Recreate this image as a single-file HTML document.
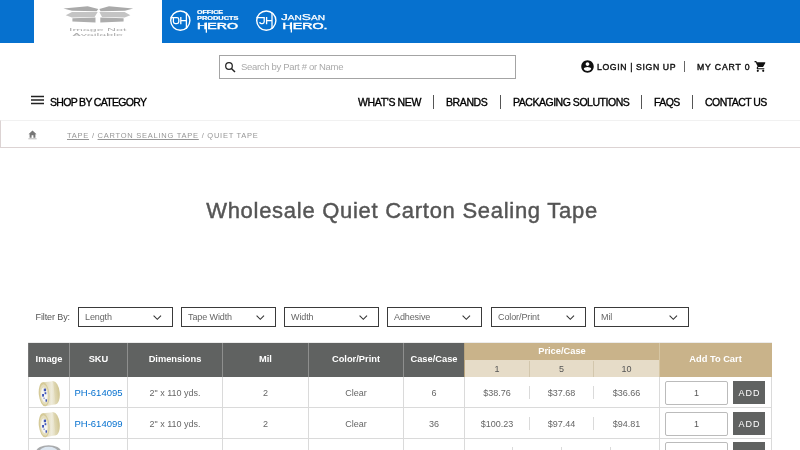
<!DOCTYPE html>
<html><head><meta charset="utf-8">
<style>
*{box-sizing:border-box;margin:0;padding:0}
html,body{width:800px;height:450px;overflow:hidden;background:#fff;font-family:"Liberation Sans",sans-serif;color:#111}
.abs{position:absolute}
#top{left:0;top:0;width:800px;height:43px;background:#0671cf}
#logo{left:34px;top:0;width:128px;height:43px;background:#fff}
#search{left:219px;top:55px;width:297px;height:24px;border:1px solid #a4a4a4;background:#fff}
.t{position:absolute;white-space:nowrap;line-height:1}
#bc{left:0;top:120px;width:800px;height:28px;border-left:1px solid #dcd3d3;border-bottom:1px solid #dcd3d3;border-top:1px solid #f1f1f1;background:#fff}
.nav{font-size:10.5px;color:#000;top:97px;letter-spacing:-0.55px;-webkit-text-stroke:0.35px #000}
.sep{position:absolute;width:1px;background:#555}
.acc{font-size:8.7px;letter-spacing:0.9px;color:#111;top:63px;-webkit-text-stroke:0.4px #111}
h1{position:absolute;left:2px;width:800px;text-align:center;top:200.3px;font-size:22px;line-height:1;font-weight:normal;color:#555;letter-spacing:0.72px;white-space:nowrap;-webkit-text-stroke:0.45px #555}
.sel{position:absolute;top:307px;height:20px;width:95px;border:1px solid #3a3a3a;background:#fff;font-size:9px;color:#666}
.sel span{position:absolute;left:6px;top:5px;line-height:1;letter-spacing:-0.1px}
.sel svg{position:absolute;left:73.500px;top:6.800px}
.c{text-align:center}
.th{color:#fff;font-size:9.3px;font-weight:bold}
.sub{color:#555;font-size:9px}
.td{color:#666;font-size:9px;margin-top:0.5px}
.sku{color:#0671cf;font-size:9.5px;margin-top:-0.5px}
.qty{width:63px;height:24px;border:1px solid #bbb;border-radius:2px;line-height:22px;background:#fff;color:#555;font-size:9px;text-align:center}
.add{width:32px;height:23px;background:#606261;color:#fff;line-height:24px;font-size:9px;letter-spacing:1px;text-indent:1px;text-align:center}
</style></head><body><div id="wrap" style="position:absolute;left:0;top:0;width:800px;height:450px;will-change:transform;background:transparent">
<div class="abs" id="top"></div>
<div class="abs" id="logo">
<svg width="128" height="43" viewBox="34 0 128 43" style="position:absolute;left:0;top:0">
 <g fill="#aaaaaa">
  <polygon points="63.4,8.4 87.6,6.2 98.3,9 96.6,11.2 72,10.8"/>
  <polygon points="133.2,8.4 109,6.2 99.4,9 100.5,11.2 125,10.8"/>
 </g>
 <g fill="#c4c4c4">
  <polygon points="65.7,15.2 72,11.9 97.7,11.9 94.6,16.9 72,17.4"/>
  <polygon points="130.4,15.2 124.6,11.9 99.4,11.9 102,16.9 124.6,17.4"/>
 </g>
 <g fill="#adadad">
  <polygon points="72.4,18.2 95.5,17.6 95.5,22.6 72.4,21.6"/>
  <polygon points="123.6,18.2 100.3,17.6 100.3,22.6 123.6,21.6"/>
 </g>
 <g fill="#adadad" style="font-family:'Liberation Sans',sans-serif;font-size:7px" text-anchor="middle">
  <text transform="translate(97.7 30.9) scale(1.78 0.56)" x="0" y="0">Image Not</text>
  <text transform="translate(97.7 36) scale(1.78 0.56)" x="0" y="0">Available</text>
 </g>
</svg>
</div>
<!-- OH logo -->
<svg class="abs" style="left:162px;top:0" width="190" height="43" viewBox="162 0 190 43">
 <g fill="none" stroke="#fff" stroke-width="1.4">
  <circle cx="180.3" cy="20.6" r="9.6"/>
  <circle cx="266.3" cy="20.6" r="9.6"/>
 </g>
 <g fill="none" stroke="#fff" stroke-width="1.3">
  <path d="M170.6,17.6 H177 Q178.8,17.6 178.8,19.4 V21.8 Q178.800,23.600 177,23.600 H175.200 Q173.400,23.600 173.400,21.800 V17.600"/>
  <path d="M180.800,17 V24.200 M180.800,20.600 H186.400 M186.400,12.500 V29"/>
  <path d="M256.600,17.600 H264.200 V21.800 Q264.200,23.600 262.400,23.600 H261.400 Q259.800,23.600 259.800,22"/>
  <path d="M266.600,17 V24.200 M266.600,20.600 H272 M272,12.500 V29"/>
 </g>
 <g fill="#fff" stroke="#fff" style="font-family:'Liberation Sans',sans-serif">
  <text x="197" y="14.300" font-size="4.600" font-weight="bold" textLength="26" lengthAdjust="spacingAndGlyphs" stroke-width="0.200">OFFICE</text>
  <text x="197" y="20.200" font-size="4.600" font-weight="bold" textLength="41.500" lengthAdjust="spacingAndGlyphs" stroke-width="0.200">PRODUCTS</text>
  <text x="197" y="28.800" font-size="8.800" textLength="41" lengthAdjust="spacingAndGlyphs" stroke-width="0.450">HERO</text>
  <rect x="205.700" y="22.500" width="1.300" height="10.200" stroke="none"/>
  <text x="281" y="20" font-size="7" textLength="44" lengthAdjust="spacingAndGlyphs" stroke-width="0.250"><tspan font-size="9.600">J</tspan>AN<tspan font-size="9.600">S</tspan>AN</text>
  <text x="282.500" y="28.600" font-size="8.800" textLength="45" lengthAdjust="spacingAndGlyphs" stroke-width="0.450">HERO.</text>
  <rect x="290.700" y="22.300" width="1.300" height="10.200" stroke="none"/>
 </g>
</svg>
<div class="abs" id="search"></div>
<svg class="abs" style="left:224px;top:61px" width="13" height="13" viewBox="0 0 13 13"><circle cx="5" cy="5" r="3.300" fill="none" stroke="#222" stroke-width="1.250"/><path d="M7.400,7.400 L11,11" stroke="#222" stroke-width="1.450"/></svg>
<div class="t" style="left:241px;top:62px;font-size:9.5px;color:#aaa;letter-spacing:-0.32px">Search by Part # or Name</div>
<svg class="abs" style="left:580px;top:58.8px" width="15" height="15" viewBox="0 0 24 24"><path fill="#111" d="M12 2C6.48 2 2 6.48 2 12s4.48 10 10 10 10-4.480 10-10S17.520 2 12 2zm0 3c1.660 0 3 1.340 3 3s-1.340 3-3 3-3-1.340-3-3 1.340-3 3-3zm0 14.200c-2.500 0-4.710-1.280-6-3.220.030-1.990 4-3.080 6-3.080 1.990 0 5.970 1.090 6 3.080-1.290 1.940-3.500 3.220-6 3.220z"/></svg>
<div class="t acc" style="left:597px;letter-spacing:0.62px">LOGIN | SIGN UP</div>
<div class="sep" style="left:684px;top:61px;height:11px;background:#666"></div>
<div class="t acc" style="left:697px;letter-spacing:0.85px">MY CART 0</div>
<svg class="abs" style="left:754px;top:60px" width="13" height="13" viewBox="0 0 24 24"><path fill="#111" d="M7 18c-1.100 0-1.990.900-1.990 2S5.900 22 7 22s2-.900 2-2-.900-2-2-2zM1 2v2h2l3.600 7.590-1.350 2.450c-.160.280-.250.610-.250.960 0 1.100.900 2 2 2h12v-2H7.420c-.140 0-.250-.110-.250-.250l.030-.120.900-1.630h7.450c.750 0 1.410-.410 1.750-1.030l3.580-6.490c.080-.140.120-.310.120-.480 0-.550-.450-1-1-1H5.210l-.940-2H1zm16 16c-1.100 0-1.990.900-1.990 2s.890 2 1.990 2 2-.900 2-2-.900-2-2-2z"/></svg>
<svg class="abs" style="left:31px;top:95px" width="14" height="10" viewBox="0 0 14 10"><path d="M0,1.600 H13 M0,5 H13 M0,8.400 H13" stroke="#222" stroke-width="1.5"/></svg>
<div class="t nav" style="left:50px;letter-spacing:-0.68px">SHOP BY CATEGORY</div>
<div class="t nav" style="left:358px;letter-spacing:-0.35px">WHAT'S NEW</div>
<div class="sep" style="left:433px;top:95px;height:14px"></div>
<div class="t nav" style="left:446px;letter-spacing:-0.4px">BRANDS</div>
<div class="sep" style="left:500px;top:95px;height:14px"></div>
<div class="t nav" style="left:513px;letter-spacing:-0.47px">PACKAGING SOLUTIONS</div>
<div class="sep" style="left:641px;top:95px;height:14px"></div>
<div class="t nav" style="left:654px">FAQS</div>
<div class="sep" style="left:692px;top:95px;height:14px"></div>
<div class="t nav" style="left:705px">CONTACT US</div>
<div class="abs" id="bc"></div>
<svg class="abs" style="left:28px;top:130px" width="9" height="10" viewBox="0 0 9 10"><path fill="#777" d="M4.500,0.500 L8.500,4.200 H7.400 V7.800 H5.400 V5.300 H3.600 V7.800 H1.600 V4.200 H0.500 Z"/><rect x="0.400" y="8.500" width="8.200" height="0.700" fill="#999"/></svg>
<div class="t" style="left:67px;top:131.700px;font-size:7.500px;letter-spacing:0.75px;color:#969696"><u>TAPE</u> / <u>CARTON SEALING TAPE</u> / QUIET TAPE</div>
<h1>Wholesale Quiet Carton Sealing Tape</h1>
<div class="t" style="left:35.500px;top:313px;font-size:9px;color:#555;letter-spacing:-0.1px">Filter By:</div>
<div class="sel" style="left:78px"><span>Length</span><svg width="9" height="6" viewBox="0 0 9 6"><path d="M0.600,0.700 L4.300,4.300 L8,0.700" fill="none" stroke="#333" stroke-width="1.100"/></svg></div>
<div class="sel" style="left:181px"><span>Tape Width</span><svg width="9" height="6" viewBox="0 0 9 6"><path d="M0.600,0.700 L4.300,4.300 L8,0.700" fill="none" stroke="#333" stroke-width="1.100"/></svg></div>
<div class="sel" style="left:284px"><span>Width</span><svg width="9" height="6" viewBox="0 0 9 6"><path d="M0.600,0.700 L4.300,4.300 L8,0.700" fill="none" stroke="#333" stroke-width="1.100"/></svg></div>
<div class="sel" style="left:387px"><span>Adhesive</span><svg width="9" height="6" viewBox="0 0 9 6"><path d="M0.600,0.700 L4.300,4.300 L8,0.700" fill="none" stroke="#333" stroke-width="1.100"/></svg></div>
<div class="sel" style="left:491px"><span>Color/Print</span><svg width="9" height="6" viewBox="0 0 9 6"><path d="M0.600,0.700 L4.300,4.300 L8,0.700" fill="none" stroke="#333" stroke-width="1.100"/></svg></div>
<div class="sel" style="left:594px"><span>Mil</span><svg width="9" height="6" viewBox="0 0 9 6"><path d="M0.600,0.700 L4.300,4.300 L8,0.700" fill="none" stroke="#333" stroke-width="1.100"/></svg></div>
<svg width="0" height="0" style="position:absolute"><defs>
 <linearGradient id="tg" x1="0" y1="0" x2="1" y2="0"><stop offset="0" stop-color="#d8cfa4"/><stop offset="0.35" stop-color="#e6e0c6"/><stop offset="0.7" stop-color="#efecdc"/><stop offset="1" stop-color="#e2dbbb"/></linearGradient>
 <linearGradient id="tg2" x1="0" y1="0" x2="1" y2="0"><stop offset="0" stop-color="#e0d9b8"/><stop offset="0.6" stop-color="#ddd5b0"/><stop offset="1" stop-color="#cfc48f"/></linearGradient>
 <g id="tape">
  <ellipse cx="16.400" cy="11.700" rx="5.300" ry="11.600" transform="rotate(-6 16.400 11.700)" fill="url(#tg2)"/>
  <polygon points="4.850,1.370 15.200,0.150 17.600,23.200 7.350,25.200" fill="url(#tg)"/>
  <ellipse cx="6.100" cy="13.300" rx="5.300" ry="12" transform="rotate(-6 6.100 13.300)" fill="#d5ca98"/>
  <ellipse cx="6.300" cy="13.500" rx="4.300" ry="10.400" transform="rotate(-6 6.300 13.500)" fill="#e4ddbd"/>
  <ellipse cx="6.300" cy="13.900" rx="3.200" ry="7.400" transform="rotate(-6 6.300 13.900)" fill="#f6f6f2"/>
  <g fill="#3f55b8"><rect x="5.800" y="7.600" width="2.200" height="2.600"/><rect x="4.100" y="13" width="1.900" height="2.600"/><rect x="6.600" y="11.200" width="1.700" height="2"/><rect x="7.500" y="18.300" width="1.500" height="2.400"/><rect x="5.500" y="16.500" width="1.200" height="1.500" opacity="0.600"/></g>
 </g>
</defs></svg>
<div class="abs" style="left:28px;top:342px;width:744px;height:1px;background:#ececec;"></div>
<div class="abs" style="left:28px;top:343px;width:436px;height:34px;background:#606261;"></div>
<div class="abs" style="left:464px;top:343px;width:308px;height:34px;background:#c9b38a;"></div>
<div class="abs" style="left:464px;top:360px;width:195px;height:17px;background:#e6dcc8;"></div>
<div class="abs" style="left:69px;top:343px;width:1px;height:34px;background:#8e8f8e;"></div>
<div class="abs" style="left:127px;top:343px;width:1px;height:34px;background:#8e8f8e;"></div>
<div class="abs" style="left:222px;top:343px;width:1px;height:34px;background:#8e8f8e;"></div>
<div class="abs" style="left:308px;top:343px;width:1px;height:34px;background:#8e8f8e;"></div>
<div class="abs" style="left:403px;top:343px;width:1px;height:34px;background:#8e8f8e;"></div>
<div class="abs" style="left:28px;top:343px;width:1px;height:34px;background:#777;"></div>
<div class="abs" style="left:464px;top:343px;width:1px;height:34px;background:#b9a57e;"></div>
<div class="abs" style="left:529px;top:361px;width:1px;height:16px;background:#d3c7ad;"></div>
<div class="abs" style="left:593px;top:361px;width:1px;height:16px;background:#d3c7ad;"></div>
<div class="abs" style="left:659px;top:343px;width:1px;height:34px;background:#d6c6a4;"></div>
<div class="abs" style="left:771px;top:343px;width:1px;height:34px;background:#c9b38a;"></div>
<div class="abs" style="left:28px;top:407px;width:744px;height:1px;background:#dadada;"></div>
<div class="abs" style="left:28px;top:438px;width:744px;height:1px;background:#dadada;"></div>
<div class="abs" style="left:28px;top:377px;width:1px;height:73px;background:#dadada;"></div>
<div class="abs" style="left:69px;top:377px;width:1px;height:73px;background:#dadada;"></div>
<div class="abs" style="left:127px;top:377px;width:1px;height:73px;background:#dadada;"></div>
<div class="abs" style="left:222px;top:377px;width:1px;height:73px;background:#dadada;"></div>
<div class="abs" style="left:308px;top:377px;width:1px;height:73px;background:#dadada;"></div>
<div class="abs" style="left:403px;top:377px;width:1px;height:73px;background:#dadada;"></div>
<div class="abs" style="left:464px;top:377px;width:1px;height:73px;background:#dadada;"></div>
<div class="abs" style="left:659px;top:377px;width:1px;height:73px;background:#dadada;"></div>
<div class="abs" style="left:771px;top:377px;width:1px;height:73px;background:#dadada;"></div>
<div class="t c th" style="left:-11.0px;top:354.5px;width:120px;">Image</div>
<div class="t c th" style="left:38.5px;top:354.5px;width:120px;">SKU</div>
<div class="t c th" style="left:115.0px;top:354.5px;width:120px;">Dimensions</div>
<div class="t c th" style="left:205.5px;top:354.5px;width:120px;">Mil</div>
<div class="t c th" style="left:296.0px;top:354.5px;width:120px;">Color/Print</div>
<div class="t c th" style="left:374.0px;top:354.5px;width:120px;">Case/Case</div>
<div class="t c th" style="left:502.0px;top:347px;width:120px;">Price/Case</div>
<div class="t c th" style="left:655.5px;top:354.5px;width:120px;">Add To Cart</div>
<div class="t c sub" style="left:437.0px;top:364.5px;width:120px;">1</div>
<div class="t c sub" style="left:501.5px;top:364.5px;width:120px;">5</div>
<div class="t c sub" style="left:566.5px;top:364.5px;width:120px;">10</div>
<svg class="abs" style="left:38px;top:380.5px" width="23" height="26" viewBox="0 0 23 26"><use href="#tape"/></svg>
<div class="t c sku" style="left:38.5px;top:388px;width:120px;">PH-614095</div>
<div class="t c td" style="left:115.0px;top:388px;width:120px;">2" x 110 yds.</div>
<div class="t c td" style="left:205.5px;top:388px;width:120px;">2</div>
<div class="t c td" style="left:296.0px;top:388px;width:120px;">Clear</div>
<div class="t c td" style="left:374.0px;top:388px;width:120px;">6</div>
<div class="t c td" style="left:437.0px;top:388px;width:120px;">$38.76</div>
<div class="t c td" style="left:501.5px;top:388px;width:120px;">$37.68</div>
<div class="t c td" style="left:566.5px;top:388px;width:120px;">$36.66</div>
<div class="abs" style="left:529px;top:386px;width:1px;height:13px;background:#dadada;"></div>
<div class="abs" style="left:593px;top:386px;width:1px;height:13px;background:#dadada;"></div>
<div class="abs qty" style="left:665px;top:381px">1</div><div class="abs add" style="left:733px;top:381px">ADD</div>
<svg class="abs" style="left:38px;top:411.5px" width="23" height="26" viewBox="0 0 23 26"><use href="#tape"/></svg>
<div class="t c sku" style="left:38.5px;top:419px;width:120px;">PH-614099</div>
<div class="t c td" style="left:115.0px;top:419px;width:120px;">2" x 110 yds.</div>
<div class="t c td" style="left:205.5px;top:419px;width:120px;">2</div>
<div class="t c td" style="left:296.0px;top:419px;width:120px;">Clear</div>
<div class="t c td" style="left:374.0px;top:419px;width:120px;">36</div>
<div class="t c td" style="left:437.0px;top:419px;width:120px;">$100.23</div>
<div class="t c td" style="left:501.5px;top:419px;width:120px;">$97.44</div>
<div class="t c td" style="left:566.5px;top:419px;width:120px;">$94.81</div>
<div class="abs" style="left:529px;top:417px;width:1px;height:13px;background:#dadada;"></div>
<div class="abs" style="left:593px;top:417px;width:1px;height:13px;background:#dadada;"></div>
<div class="abs qty" style="left:665px;top:412px">1</div><div class="abs add" style="left:733px;top:412px">ADD</div>
<svg class="abs" style="left:36px;top:445px" width="26" height="5" viewBox="0 0 26 5"><ellipse cx="12.600" cy="6.400" rx="12.400" ry="6.200" fill="#a9abad"/><ellipse cx="12.600" cy="6.600" rx="9" ry="4.800" fill="#dde7f1"/></svg>
<div class="abs" style="left:512px;top:447px;width:1px;height:3px;background:#dadada;"></div>
<div class="abs" style="left:561px;top:447px;width:1px;height:3px;background:#dadada;"></div>
<div class="abs" style="left:610px;top:447px;width:1px;height:3px;background:#dadada;"></div>
<div class="abs qty" style="left:665px;top:442px">1</div><div class="abs add" style="left:733px;top:442px">ADD</div>

</div></body></html>
